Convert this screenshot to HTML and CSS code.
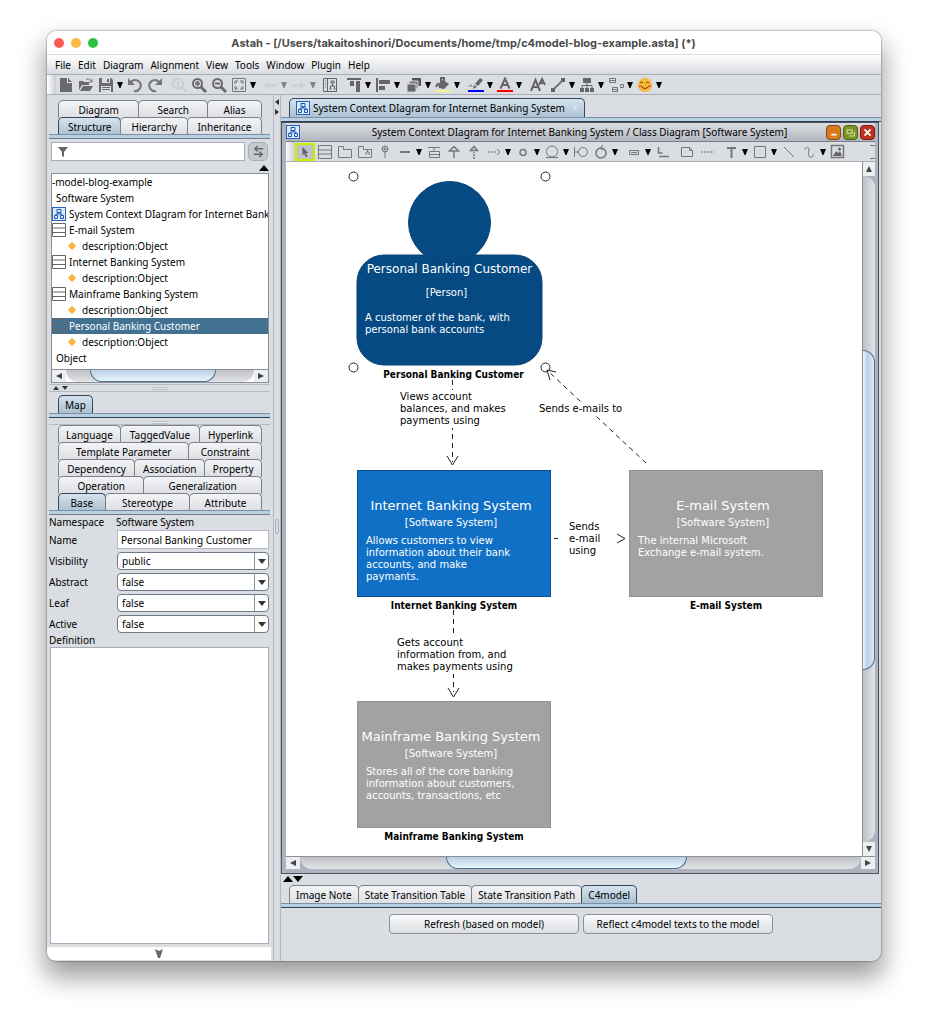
FILE: index.html
```html
<!DOCTYPE html>
<html lang="en">
<head>
<meta charset="utf-8">
<title>Astah - c4model-blog-example.asta</title>
<link rel="stylesheet" href="styles.css">
</head>
<body>
<svg class="defs" aria-hidden="true">
  <symbol id="i-diagram" viewBox="0 0 14 14"><rect x=".5" y=".5" width="13" height="13" fill="#dcebfb" stroke="#2a62b8"/><path d="M5 2.500h4v3H5zM2.500 8.500h3v3h-3zM8.500 8.500h3v3h-3zM7 5.500v1.500M4 8.500V7h6v1.500" fill="none" stroke="#1c56b4"/></symbol>
  <symbol id="i-class" viewBox="0 0 14 14"><path d="M.5.500h13v13H.500zM.500 5h13M.500 9.500h13" fill="none" stroke="#666"/></symbol>
  <symbol id="i-attr" viewBox="0 0 10 10"><path d="M5 1l4 4-4 4-4-4z" fill="#fbb034"/></symbol>
  <symbol id="i-caret" viewBox="0 0 6 6"><path d="M0 0h6L3.500 6h-1z" fill="currentColor"/></symbol>
</svg>
<div class="window">
  <header class="titlebar">
    <span class="light red"></span><span class="light amber"></span><span class="light green"></span>
    <h1>Astah - [/Users/takaitoshinori/Documents/home/tmp/c4model-blog-example.asta] (*)</h1>
  </header>
  <nav class="menubar">
    <button>File</button><button>Edit</button><button>Diagram</button><button>Alignment</button><button>View</button><button>Tools</button><button>Window</button><button>Plugin</button><button>Help</button>
  </nav>
  <div class="toolbar main-tools">
    <button class="tool" aria-label="New"><svg viewBox="0 0 16 16"><path d="M2 1h7v5h5v9H2zM10 1l4 4h-4z" fill="#6b6b6b"/></svg></button>
    <button class="tool" aria-label="Open"><svg viewBox="0 0 16 16"><path d="M1 13V4h4l1 1h5v3H4zM2 14l3-5h10l-3 5z" fill="#6b6b6b"/><path d="M8 3c2-2 4-1 5 1M14 2v3h-3" fill="none" stroke="#6b6b6b"/></svg></button>
    <button class="tool split" aria-label="Save"><svg viewBox="0 0 16 16"><path d="M1 1h12l2 2v12H1z" fill="#6b6b6b"/><path d="M4 1h8v5H4zM3 9h10v6H3z" fill="#dadde2"/><path d="M9 2h2v3H9zM4 10h8v1H4zM4 12h8v1H4z" fill="#6b6b6b"/></svg><svg class="caret"><use href="#i-caret"/></svg></button>
    <button class="tool" aria-label="Undo"><svg viewBox="0 0 16 16"><path d="M4 5a5.500 5.500 0 1 1 3 9" fill="none" stroke="#777" stroke-width="2"/><path d="M1 1v7h7z" fill="#777"/></svg></button>
    <button class="tool" aria-label="Redo"><svg viewBox="0 0 16 16"><path d="M12 5a5.500 5.500 0 1 0-3 9" fill="none" stroke="#777" stroke-width="2"/><path d="M15 1v7H8z" fill="#777"/></svg></button>
    <button class="tool gap4 faded" aria-label="Actual size"><svg viewBox="0 0 16 16"><circle cx="7" cy="6.500" r="5" fill="none" stroke="#777" stroke-width="2"/><path d="M11 10l4 5M7 4v5" stroke="#777" stroke-width="2"/></svg></button>
    <button class="tool" aria-label="Zoom in"><svg viewBox="0 0 16 16"><circle cx="6.500" cy="6.500" r="4.500" fill="none" stroke="#6b6b6b" stroke-width="2"/><path d="M10 10l5 5" stroke="#6b6b6b" stroke-width="3"/><path d="M4 6.500h5M6.500 4v5" stroke="#6b6b6b" stroke-width="2"/></svg></button>
    <button class="tool" aria-label="Zoom out"><svg viewBox="0 0 16 16"><circle cx="6.500" cy="6.500" r="4.500" fill="none" stroke="#6b6b6b" stroke-width="2"/><path d="M10 10l5 5" stroke="#6b6b6b" stroke-width="3"/><path d="M4 6.500h5" stroke="#6b6b6b" stroke-width="2"/></svg></button>
    <button class="tool split" aria-label="Fit"><svg viewBox="0 0 16 16"><path d="M1.500 1.500h13v13h-13z" fill="none" stroke="#777"/><path d="M4 7V4h3M9 4h3v3M12 9v3H9M7 12H4V9M4 4l2 2M12 4l-2 2M12 12l-2-2M4 12l2-2" fill="none" stroke="#777"/></svg><svg class="caret"><use href="#i-caret"/></svg></button>
    <button class="tool split gap2 faded" aria-label="Back"><svg viewBox="0 0 16 16"><path d="M1 8l6-4v3h8v3H7v2z" fill="#999"/></svg><svg class="caret"><use href="#i-caret"/></svg></button>
    <button class="tool split faded" aria-label="Forward"><svg viewBox="0 0 16 16"><path d="M15 8L9 4v3H1v3h8v2z" fill="#999"/></svg><svg class="caret"><use href="#i-caret"/></svg></button>
    <button class="tool gap2" aria-label="Diagram tree"><svg viewBox="0 0 16 16"><path d="M1.500 1.500h13v13h-13zM5.500 2v12M9 4h3v2H9zM10.500 6v3M8.500 12V9h4v3M7.500 12h2M11.500 12h2M3 4h1M3 7h1M3 10h1" fill="none" stroke="#666"/></svg></button>
    <button class="tool split gap4" aria-label="Align top"><svg viewBox="0 0 16 16"><path d="M1 1h14v2H1zM4 4h4v5H4zM10 4h4v11h-4z" fill="#666"/></svg><svg class="caret"><use href="#i-caret"/></svg></button>
    <button class="tool split" aria-label="Align left"><svg viewBox="0 0 16 16"><path d="M1 1h2v14H1zM4 3h11v4H4zM4 9h6v4H4z" fill="#666"/></svg><svg class="caret"><use href="#i-caret"/></svg></button>
    <button class="tool split gap2" aria-label="Depth"><svg viewBox="0 0 16 16"><path d="M6 1h9v8H6z" fill="#555"/><path d="M3 4h9v8H3z" fill="#777" stroke="#dadde2"/><path d="M1 7h9v8H1z" fill="#666" stroke="#dadde2"/></svg><svg class="caret"><use href="#i-caret"/></svg></button>
    <button class="tool split" aria-label="Fill color"><svg viewBox="0 0 16 16"><path d="M3 7l5-4 6 4-5 5-5-1z" fill="#666"/><path d="M6 5V1h3v4M3 6L1 10" fill="none" stroke="#666" stroke-width="2"/><path d="M0 13h16v2H0z" fill="#f8f08c"/></svg><svg class="caret"><use href="#i-caret"/></svg></button>
    <button class="tool split gap4" aria-label="Line color"><svg viewBox="0 0 16 16"><path d="M7 7l5-6 3 2-5 6zM6 8l3 2-4 2z" fill="#666"/><path d="M1 10c1-3 3-2 3 0" fill="none" stroke="#666"/><path d="M0 13h16v2H0z" fill="#00f"/></svg><svg class="caret"><use href="#i-caret"/></svg></button>
    <button class="tool split" aria-label="Font color"><svg viewBox="0 0 16 16"><path d="M3.500 11.500L8 1.500l4.500 10M5 8h6" fill="none" stroke="#666" stroke-width="2"/><path d="M0 13h16v2H0z" fill="#f00"/></svg><svg class="caret"><use href="#i-caret"/></svg></button>
    <button class="tool gap4" aria-label="Font"><svg viewBox="0 0 16 16"><path d="M1 14L5.500 3 10 14M3 10h5" fill="none" stroke="#666" stroke-width="2"/><path d="M9 8l3-6 3 6M10 6h4" fill="none" stroke="#666" stroke-width="2"/></svg></button>
    <button class="tool split" aria-label="Line style"><svg viewBox="0 0 16 16"><path d="M3 13L13 3" stroke="#777" stroke-width="2"/><path d="M1 11h4v4H1zM11 1h4v4h-4z" fill="#666"/></svg><svg class="caret"><use href="#i-caret"/></svg></button>
    <button class="tool split" aria-label="Tree layout"><svg viewBox="0 0 16 16"><path d="M4 1h8v5H4zM1 11h4v4H1zM6 11h4v4H6zM11 11h4v4h-4z" fill="#666"/><path d="M8 6v5M3 11V8.500h10V11" fill="none" stroke="#666"/></svg><svg class="caret"><use href="#i-caret"/></svg></button>
    <button class="tool split" aria-label="Auto layout"><svg viewBox="0 0 16 16"><path d="M1.500 1.500h6v4h-6zM1.500 3.500h6M4.500 10.500h5v4h-5zM4.500 12.500h5M12.500 7.500h3v3h-3z" fill="none" stroke="#777"/></svg><svg class="caret"><use href="#i-caret"/></svg></button>
    <button class="tool split" aria-label="Emoji"><svg viewBox="0 0 16 16"><circle cx="8" cy="8" r="7" fill="#f8b836"/><circle cx="3" cy="9" r="1.500" fill="#f07f32"/><circle cx="13" cy="9" r="1.500" fill="#f07f32"/><path d="M3 6q2-2 3 0M9 6q2-2 3 0M4 9q4 5 8 0" fill="none" stroke="#6b3f14"/></svg><svg class="caret"><use href="#i-caret"/></svg></button>
  </div>
  <div class="workspace">
    <aside class="side">
      <div class="tabs stack">
        <div class="tabrow"><button class="tab w81">Diagram</button><button class="tab w69">Search</button><button class="tab w54">Alias</button></div>
        <div class="tabrow"><button class="tab on w63">Structure</button><button class="tab w67">Hierarchy</button><button class="tab w75">Inheritance</button></div>
      </div>
      <div class="searchrow">
        <label class="search"><svg viewBox="0 0 12 12"><path d="M1 1h10L7 6v5L5 10V6z" fill="#666"/></svg><input type="text" aria-label="Filter"></label>
        <button class="swap" aria-label="Sync"><svg viewBox="0 0 14 14"><path d="M12 4H3M6 1L3 4l3 3M2 10h9M8 7l3 3-3 3" fill="none" stroke="#666" stroke-width="1.500"/></svg></button>
      </div>
      <div class="collapse"><svg viewBox="0 0 10 6"><path d="M0 6l5-6 5 6z"/></svg></div>
      <div class="treebox">
        <ul class="tree">
          <li>-model-blog-example</li>
          <li class="in1">Software System</li>
          <li><svg class="ic"><use href="#i-diagram"/></svg>System Context DIagram for Internet Banking System</li>
          <li><svg class="ic"><use href="#i-class"/></svg>E-mail System</li>
          <li class="in2"><svg class="dot"><use href="#i-attr"/></svg>description:Object</li>
          <li><svg class="ic"><use href="#i-class"/></svg>Internet Banking System</li>
          <li class="in2"><svg class="dot"><use href="#i-attr"/></svg>description:Object</li>
          <li><svg class="ic"><use href="#i-class"/></svg>Mainframe Banking System</li>
          <li class="in2"><svg class="dot"><use href="#i-attr"/></svg>description:Object</li>
          <li class="sel"><svg class="ic"><use href="#i-class"/></svg>Personal Banking Customer</li>
          <li class="in2"><svg class="dot"><use href="#i-attr"/></svg>description:Object</li>
          <li class="in1">Object</li>
        </ul>
        <div class="hscroll side-scroll"><i class="btn left"></i><span class="track"><b></b></span><i class="btn right"></i></div>
      </div>
      <div class="splitter"><svg viewBox="0 0 16 4"><path d="M0 4l3-4 3 4zM9 0h6l-3 4z" fill="#333"/></svg><span class="grip"></span></div>
      <div class="tabs single"><div class="tabrow"><button class="tab on">Map</button></div></div>
      <div class="splitter thin"><span class="grip"></span></div>
      <div class="tabs stack props">
        <div class="tabrow"><button class="tab w63">Language</button><button class="tab w81">TaggedValue</button><button class="tab w63">Hyperlink</button></div>
        <div class="tabrow"><button class="tab w132">Template Parameter</button><button class="tab w73">Constraint</button></div>
        <div class="tabrow"><button class="tab w77">Dependency</button><button class="tab w71">Association</button><button class="tab w57">Property</button></div>
        <div class="tabrow"><button class="tab w86">Operation</button><button class="tab w119">Generalization</button></div>
        <div class="tabrow"><button class="tab on w47">Base</button><button class="tab w86">Stereotype</button><button class="tab w73">Attribute</button></div>
      </div>
      <form class="form">
        <div class="field ns"><span>Namespace</span><span>Software System</span></div>
        <div class="field"><label for="nm">Name</label><input id="nm" type="text" value="Personal Banking Customer"></div>
        <div class="field"><label for="vis">Visibility</label><span class="combo"><select id="vis"><option>public</option></select></span></div>
        <div class="field"><label for="abs">Abstract</label><span class="combo"><select id="abs"><option>false</option></select></span></div>
        <div class="field"><label for="leaf">Leaf</label><span class="combo"><select id="leaf"><option>false</option></select></span></div>
        <div class="field"><label for="act">Active</label><span class="combo"><select id="act"><option>false</option></select></span></div>
        <label class="deflabel" for="def">Definition</label>
        <textarea id="def"></textarea>
      </form>
      <div class="more"><svg viewBox="0 0 8 9"><path d="M0 0l4 2 4-2-3 9H3z" fill="#666"/></svg></div>
    </aside>
    <div class="divider"><svg viewBox="0 0 4 16"><path d="M4 0v6L0 3zM0 10v6l4-3z" fill="#333"/></svg><span></span></div>
    <main class="editor">
      <div class="tabs doc"><div class="tabrow"><button class="tab on"><svg class="ic"><use href="#i-diagram"/></svg>System Context DIagram for Internet Banking System<span class="x">×</span></button></div></div>
      <section class="frame">
        <div class="frametitle">
          <svg class="ic"><use href="#i-diagram"/></svg>
          <h2>System Context DIagram for Internet Banking System / Class Diagram [Software System]</h2>
          <button class="wb min" aria-label="Minimize"><svg viewBox="0 0 15 15"><path d="M5 10h6" stroke="#fff" stroke-width="2"/></svg></button>
          <button class="wb max" aria-label="Restore"><svg viewBox="0 0 15 15"><path d="M3.500 4.500h6v4h-6zM6 11.500h6v-5" fill="none" stroke="#e6eecb"/></svg></button>
          <button class="wb close" aria-label="Close"><svg viewBox="0 0 15 15"><path d="M4 4l7 7M11 4l-7 7" stroke="#fff" stroke-width="2"/></svg></button>
        </div>
        <div class="toolbar draw-tools">
          <button class="tool active" aria-label="Select"><svg viewBox="0 0 16 16"><path d="M5 2l7 7H9l2 4-2 1-2-4-2 2z" fill="#666"/></svg></button>
          <button class="tool" aria-label="Class"><svg viewBox="0 0 16 16"><path d="M1.500 1.500h13v13h-13zM1.500 6h13M1.500 10h13" fill="none" stroke="#777"/></svg></button>
          <button class="tool" aria-label="Package"><svg viewBox="0 0 16 16"><path d="M1.500 13.500v-11h5v3h8v8z" fill="none" stroke="#777"/></svg></button>
          <button class="tool" aria-label="Subsystem"><svg viewBox="0 0 16 16"><path d="M1.500 13.500v-11h5v3h8v8zM9 11V8h3v3M10.500 8V6" fill="none" stroke="#777"/></svg></button>
          <button class="tool" aria-label="Containment"><svg viewBox="0 0 16 16"><circle cx="8" cy="5" r="3" fill="none" stroke="#777"/><path d="M8 2v12M5 5h6" stroke="#777"/></svg></button>
          <button class="tool split" aria-label="Association"><svg viewBox="0 0 16 16"><path d="M3 8h10" stroke="#777" stroke-width="2"/></svg><svg class="caret"><use href="#i-caret"/></svg></button>
          <button class="tool" aria-label="Association class"><svg viewBox="0 0 16 16"><path d="M2 3.500h12M8 3v4M3.500 7.500h10v6h-10zM3.500 10.500h10" fill="none" stroke="#777"/></svg></button>
          <button class="tool" aria-label="Generalization"><svg viewBox="0 0 16 16"><path d="M8 7v7M3.500 7L8 2.500 12.500 7z" fill="none" stroke="#777" stroke-width="1.500"/></svg></button>
          <button class="tool" aria-label="Realization"><svg viewBox="0 0 16 16"><path d="M8 8v1M8 10v2M8 13v2M4.500 6.500L8 2.500l3.500 4z" fill="none" stroke="#777" stroke-width="1.500"/></svg></button>
          <button class="tool split" aria-label="Dependency"><svg viewBox="0 0 16 16"><path d="M2 8h9" stroke="#777" stroke-dasharray="2 1"/><path d="M11 5l3 3-3 3" fill="none" stroke="#777"/></svg><svg class="caret"><use href="#i-caret"/></svg></button>
          <button class="tool split" aria-label="Interface"><svg viewBox="0 0 16 16"><circle cx="8" cy="8.500" r="3" fill="none" stroke="#777" stroke-width="1.500"/></svg><svg class="caret"><use href="#i-caret"/></svg></button>
          <button class="tool split" aria-label="Entity"><svg viewBox="0 0 16 16"><circle cx="8" cy="7.500" r="5.500" fill="none" stroke="#777"/><path d="M2 13.500h12" stroke="#777"/></svg><svg class="caret"><use href="#i-caret"/></svg></button>
          <button class="tool" aria-label="Boundary"><svg viewBox="0 0 16 16"><circle cx="10" cy="8" r="4.500" fill="none" stroke="#777"/><path d="M1.500 3v10M2 8h4" stroke="#777"/></svg></button>
          <button class="tool split" aria-label="Control"><svg viewBox="0 0 16 16"><circle cx="8" cy="9" r="5" fill="none" stroke="#777" stroke-width="1.500"/><path d="M10 1L7 4l3 2" fill="none" stroke="#777"/></svg><svg class="caret"><use href="#i-caret"/></svg></button>
          <button class="tool split gap4" aria-label="Instance"><svg viewBox="0 0 16 16"><path d="M3.500 6.500h9v4h-9zM5 8.500h6" fill="none" stroke="#777"/></svg><svg class="caret"><use href="#i-caret"/></svg></button>
          <button class="tool" aria-label="Link"><svg viewBox="0 0 16 16"><path d="M3.500 3v6h4M4 12.500h10" fill="none" stroke="#777" stroke-width="1.500"/></svg></button>
          <button class="tool gap4" aria-label="Note"><svg viewBox="0 0 16 16"><path d="M2.500 3.500h8l3 3v6h-11zM10.500 3.500v3h3" fill="none" stroke="#777"/></svg></button>
          <button class="tool" aria-label="Note anchor"><svg viewBox="0 0 16 16"><path d="M2 8h13" stroke="#777" stroke-dasharray="2 1"/></svg></button>
          <button class="tool split gap4" aria-label="Text"><svg viewBox="0 0 16 16"><path d="M4 4h9M8.500 4v10" stroke="#777" stroke-width="2"/></svg><svg class="caret"><use href="#i-caret"/></svg></button>
          <button class="tool split" aria-label="Rectangle"><svg viewBox="0 0 16 16"><path d="M2.500 2.500h11v11h-11z" fill="none" stroke="#777"/></svg><svg class="caret"><use href="#i-caret"/></svg></button>
          <button class="tool" aria-label="Line"><svg viewBox="0 0 16 16"><path d="M3 3l10 10" stroke="#777"/></svg></button>
          <button class="tool split" aria-label="Freehand"><svg viewBox="0 0 16 16"><path d="M4 6c0-4 5-3 4 0s-1 6 1 7 4-1 3-3" fill="none" stroke="#777"/></svg><svg class="caret"><use href="#i-caret"/></svg></button>
          <button class="tool" aria-label="Image"><svg viewBox="0 0 16 16"><path d="M1.500 1.500h12v12h-12z" fill="none" stroke="#777" stroke-width="1.500"/><path d="M3 12l3-5 2 2 2-2 2 5z" fill="#666"/><circle cx="9.500" cy="5" r="1.500" fill="#666"/></svg></button>
          <span class="overflow"></span>
        </div>
        <div class="viewport">
          <div class="canvas">
            <svg class="edges" width="576" height="695" viewBox="0 0 576 695">
              <g fill="none" stroke="#222">
                <path d="M166.500 218V300" stroke-dasharray="5 4"/>
                <path d="M161 294l5.500 9 5.500-9"/>
                <path d="M360 301L262 209" stroke-dasharray="5 4"/>
                <path d="M270 210l-9-2 3 10"/>
                <path d="M268 376.500h4M331 372l8 4.500-8 4.500"/>
                <path d="M167.500 448v82" stroke-dasharray="5 4"/>
                <path d="M162 526l5.500 9 5.500-9"/>
              </g>
              <g fill="#054a82" stroke="#0a4274">
                <rect x="71" y="93" width="185" height="110" rx="27"/>
                <circle cx="163.500" cy="60.500" r="41"/>
                <path d="M108.500 142v60M219.500 142v60" opacity=".5"/>
              </g>
              <g fill="#fff" stroke="#222"><circle cx="67.500" cy="14.500" r="4.500"/><circle cx="259.500" cy="14.500" r="4.500"/><circle cx="67.500" cy="205.500" r="4.500"/><circle cx="259.500" cy="205.500" r="4.500" fill="none"/></g>
            </svg>
            <article class="node person"><h3>Personal Banking Customer</h3><p class="kind">[Person]</p><p class="desc">A customer of the bank, with<br>personal bank accounts</p><footer>Personal Banking Customer</footer></article>
            <article class="node ibs"><div class="card"><h3>Internet Banking System</h3><p class="kind">[Software System]</p><p class="desc">Allows customers to view<br>information about their bank<br>accounts, and make<br>paymants.</p></div><footer>Internet Banking System</footer></article>
            <article class="node email"><div class="card"><h3>E-mail System</h3><p class="kind">[Software System]</p><p class="desc">The internal Microsoft<br>Exchange e-mail system.</p></div><footer>E-mail System</footer></article>
            <article class="node mainframe"><div class="card"><h3>Mainframe Banking System</h3><p class="kind">[Software System]</p><p class="desc">Stores all of the core banking<br>information about customers,<br>accounts, transactions, etc</p></div><footer>Mainframe Banking System</footer></article>
            <p class="edge e1">Views account<br>balances, and makes<br>payments using</p>
            <p class="edge e2">Sends e-mails to</p>
            <p class="edge e3">Sends<br>e-mail<br>using</p>
            <p class="edge e4">Gets account<br>information from, and<br>makes payments using</p>
          </div>
          <div class="vscroll"><i class="btn up"></i><span class="track"><b></b></span><i class="btn down"></i></div>
          <div class="hscroll main-scroll"><i class="btn left"></i><span class="track"><b></b></span><i class="btn right"></i></div>
        </div>
      </section>
      <div class="updown"><svg viewBox="0 0 20 6"><path d="M0 6l5-6 5 6zM10 0h10l-5 6z"/></svg></div>
      <div class="tabs extra"><div class="tabrow"><button class="tab">Image Note</button><button class="tab">State Transition Table</button><button class="tab">State Transition Path</button><button class="tab on">C4model</button></div></div>
      <div class="actions"><button>Refresh (based on model)</button><button>Reflect c4model texts to the model</button></div>
    </main>
  </div>
</div>
</body>
</html>
```
FILE: styles.css
```css
* { box-sizing: border-box; }
body {
  margin: 0; min-height: 100vh; padding: 31px 47px 62px 47px;
  display: flex; background: #fff; color: #000;
  font: 10px/14px "Noto Sans", "Open Sans", sans-serif;
}
button, input, select, textarea { font: inherit; color: inherit; margin: 0; }
button { border: 0; background: none; padding: 0; }
h1, h2, h3, p, ul { margin: 0; padding: 0; font-size: inherit; font-weight: inherit; }
svg { display: block; }
.defs { position: absolute; width: 0; height: 0; }
.window {
  flex: 1; min-width: 0; display: flex; flex-direction: column; overflow: hidden;
  background: #dadde2; border-radius: 9px;
  box-shadow: 0 0 1px 1px rgba(0,0,0,.2), 0 14px 26px 2px rgba(0,0,0,.4);
}
.titlebar { height: 24px; display: flex; align-items: center; gap: 7px; padding: 0 7px; background: #fff; border-bottom: 1px solid #ddd; }
.light { width: 10px; height: 10px; border-radius: 50%; }
.red { background: #fc5b57; } .amber { background: #fdb93f; } .green { background: #29c340; }
.titlebar h1 { flex: 1; padding-right: 52px; text-align: center; font: bold 11px/14px Inter, sans-serif; color: #4a4a4a; }
.menubar { height: 20px; display: flex; align-items: center; gap: 7px; padding: 0 8px; background: linear-gradient(#fff, #d8dbe0); border-bottom: 1px solid #a9adb5; }
.toolbar { display: flex; align-items: center; height: 20px; border-bottom: 1px solid #a9adb5; background: #dadde2; }
.toolbar::before { content: ""; width: 9px; align-self: stretch; background: linear-gradient(90deg, #fff, #c9ccd2); }
.tool { display: flex; align-items: center; width: 20px; height: 18px; padding: 0 2px; }
.tool svg { width: 16px; height: 16px; flex: none; }
.split { width: 29px; }
.tool .caret { width: 6px; height: 6px; margin-left: 3px; color: #000; }
.gap2 { margin-left: 2px; }
.gap4 { margin-left: 4px; }
.faded { opacity: .4; }
.faded svg:first-child { opacity: .4; }
.workspace { flex: 1; min-height: 0; display: flex; }

.side { width: 226px; display: flex; flex-direction: column; padding: 5px 1px 1px 0; }
.tabrow { display: flex; }
.tab {
  height: 18px; margin-bottom: -1px; padding: 0 6px; border: 1px solid #7d8087; border-radius: 5px 5px 0 0; border-bottom: 0;
  background: linear-gradient(#f3f4f6, #dcdee3); white-space: nowrap;
}
.tab + .tab { margin-left: -1px; }
.tab.on { background: linear-gradient(#d6e3ee, #a9bfd0); border-color: #33475e; }
.tabs { border-bottom: 1px solid #2c3d55; }
.tabs::after { content: ""; display: block; height: 3px; border-top: 1px solid #7d8fa3; background: #b9d0e2; position: relative; }
.stack { margin: 0 2px; border-color: #717c8c; }
.stack .tabrow { padding: 0 8px 0 9px; }
.stack .tab { flex: 1 1 0; min-width: 0; padding: 0; }
.stack .w47 { flex-grow: 47; } .stack .w54 { flex-grow: 54; } .stack .w57 { flex-grow: 57; } .stack .w63 { flex-grow: 63; }
.stack .w67 { flex-grow: 67; } .stack .w69 { flex-grow: 69; } .stack .w71 { flex-grow: 71; } .stack .w73 { flex-grow: 73; }
.stack .w75 { flex-grow: 75; } .stack .w77 { flex-grow: 77; } .stack .w81 { flex-grow: 81; } .stack .w86 { flex-grow: 86; }
.stack .w119 { flex-grow: 119; } .stack .w132 { flex-grow: 132; }
.searchrow { display: flex; gap: 3px; padding: 3px 4px 0; height: 22px; }
.search { flex: 1; display: flex; align-items: center; padding-left: 5px; background: #fff; border: 1px solid #aab; }
.search svg { width: 12px; height: 12px; }
.search input { flex: 1; min-width: 0; border: 0; outline: 0; background: none; }
.swap { width: 20px; display: grid; place-items: center; background: #c5c8ce; border: 1px solid #a9acb3; border-radius: 5px; }
.swap svg { width: 13px; height: 13px; }
.collapse { height: 12px; padding: 4px 3px 0; display: flex; justify-content: flex-end; }
.collapse svg { width: 10px; height: 6px; }
.treebox { margin: 0 3px 0 4px; border: 1px solid #8c9099; background: #fff; overflow: hidden; }
.tree { list-style: none; padding: 0 0 3px; }
.tree li { height: 16px; display: flex; align-items: center; white-space: nowrap; overflow: hidden; }
.tree .ic { margin-right: 3px; }
.ic { width: 14px; height: 14px; flex: none; }
.tree .in1 { padding-left: 4px; }
.tree .in2 { padding-left: 15px; }
.dot { width: 10px; height: 10px; margin-right: 5px; }
.tree .sel { background: #427192; color: #fff; }

.hscroll { display: flex; height: 13px; border-top: 1px solid #8c9099; }
.hscroll .btn { width: 14px; }
.btn { display: grid; place-items: center; background: #eceef1; }
.btn::after { content: ""; border: 3px solid transparent; }
.left::after { border-right: 6px solid #444; border-left: 0; }
.right::after { border-left: 6px solid #444; border-right: 0; }
.up::after { border-bottom: 6px solid #444; border-top: 0; }
.down::after { border-top: 6px solid #444; border-bottom: 0; }
.track { flex: 1; display: flex; background: linear-gradient(#bfc1c6, #e2e4e8); }
.hscroll .track { border-radius: 0 0 12px 12px; }
.hscroll b { border: 1px solid #4f6f8f; border-top: 0; border-radius: 0 0 12px 12px; background: linear-gradient(#b9cfe3, #e8f6ff); }
.side-scroll b { width: 67%; margin-left: 13%; }
.main-scroll b { width: 43%; margin-left: 26%; }
.splitter { height: 8px; display: grid; grid-template-columns: 1fr 16px 1fr; align-items: center; margin: 1px 2px 0; border-top: 1px solid #b5b9c1; border-bottom: 1px solid #b5b9c1; }
.splitter svg { width: 16px; height: 4px; margin-left: 4px; }
.grip { grid-column: 2; height: 3px; border: 1px solid #b5b9c1; border-radius: 2px; background: #eee; }
.thin { height: 5px; margin-top: 2px; border-top: 0; }
.single { margin: 3px 2px 0; }
.single .tabrow { padding-left: 9px; }
.single .tab { height: 19px; }
.form { flex: 1; display: flex; flex-direction: column; padding: 0 3px 0 2px; }
.field { display: grid; grid-template-columns: 68px 1fr; align-items: center; height: 21px; }
.ns { height: 14px; grid-template-columns: 67px 1fr; }
.field input { height: 19px; width: 100%; padding: 0 3px; border: 1px solid #b5b9c1; background: #fff; }
.combo { display: flex; position: relative; height: 18px; }
.combo select { flex: 1; appearance: none; border: 1px solid #6f7a8a; border-radius: 4px; background: #fff; padding: 0 4px; line-height: 14px; }
.combo::after { content: ""; position: absolute; right: 3px; top: 7px; border: 4px solid transparent; border-top: 5px solid #333; border-bottom: 0; pointer-events: none; }
.combo::before { content: ""; position: absolute; right: 14px; top: 1px; bottom: 1px; border-left: 1px solid #8795a8; }
.deflabel { height: 13px; line-height: 13px; }
.form textarea { flex: 1; resize: none; margin: 0 0 3px 1px; border: 1px solid #a9acb8; background: #fff; padding: 2px; }
.more { height: 13px; margin-right: 1px; background: #fff; display: grid; place-items: center; }
.more svg { width: 8px; height: 9px; }
.divider { width: 8px; border-left: 1px solid #b5b9c1; border-right: 1px solid #b5b9c1; display: flex; flex-direction: column; align-items: center; padding-top: 4px; }
.divider svg { width: 4px; height: 16px; }
.divider span { width: 4px; height: 15px; margin-top: 404px; border: 1px solid #a9adb5; border-radius: 2px; }

.editor { flex: 1; min-width: 0; display: flex; flex-direction: column; }
.doc { padding-top: 3px; }
.doc .tabrow, .extra .tabrow { padding-left: 8px; }
.doc .tab { display: flex; align-items: center; gap: 3px; height: 20px; padding: 0 6px 1px; }
.x { margin-left: 4px; color: #dfe6ec; font-weight: bold; }
.frame { flex: 1; min-height: 0; display: flex; flex-direction: column; margin-right: 2px; padding: 0 3px 4px 4px; border: 1px solid #4a5260; background: #aeb3bd; }
.frametitle { display: flex; align-items: center; gap: 2px; height: 19px; background: linear-gradient(#dcdee2, #b3b6bf); border-bottom: 1px solid #777e8a; }
.frametitle h2 { flex: 1; padding-left: 33px; text-align: center; white-space: nowrap; overflow: hidden; }
.wb { width: 15px; height: 15px; border-radius: 4px; border: 1px solid #7a4a1a; }
.wb svg { width: 13px; height: 13px; }
.min { background: #d97a1c; } .max { background: #7d9420; border-color: #4c5e12; } .close { background: #c0301f; border-color: #7a1a10; }
.active { background: #c0c3c9; border: 2px solid #c8f000; padding: 0; }
.active svg { width: 16px; height: 14px; }
.overflow { width: 5px; height: 14px; margin-left: auto; border: solid #777; border-width: 1px 0; }
.viewport { flex: 1; min-height: 0; display: grid; grid-template: 1fr 13px / 1fr 13px; }
.canvas { position: relative; overflow: hidden; background: #fff; font-family: "DejaVu Sans", sans-serif; }
.main-scroll { grid-column: 1 / -1; }
.vscroll { display: flex; flex-direction: column; border-left: 1px solid #8c9099; }
.vscroll .btn { height: 14px; }
.vscroll .track { flex-direction: column; border-radius: 0 12px 12px 0; background: linear-gradient(90deg, #bfc1c6, #e2e4e8); }
.vscroll b { height: 48%; margin-top: 174px; border: 1px solid #4f6f8f; border-left: 0; border-radius: 0 12px 12px 0; background: linear-gradient(90deg, #e8f6ff, #b9cfe3 40%, #dcecf8); }

.edges { position: absolute; left: 0; top: 0; }
.node { position: absolute; width: 194px; line-height: 12px; color: #fff; }
.node h3 { font-size: 13px; line-height: 18px; text-align: center; white-space: nowrap; }
.kind { line-height: 15px; text-align: center; }
.desc { padding-left: 8px; margin-top: 5px; white-space: nowrap; }
.node footer { margin-top: 3px; text-align: center; font-family: "DejaVu Sans Condensed", sans-serif; font-weight: bold; color: #000; }
.card { height: 127px; padding: 26px 6px 0 0; border: 1px solid #0b4f92; background: #1070c5; }
.email .card, .mainframe .card { background: #a2a2a2; border-color: #929292; }
.person { left: 71px; top: 98px; width: 185px; }
.person h3 { font-size: 12px; }
.person .kind { margin-top: 7px; padding-right: 6px; }
.person .desc { margin-top: 12px; height: 54px; }
.person footer { padding-left: 8px; }
.ibs { left: 71px; top: 308px; }
.email { left: 343px; top: 308px; }
.mainframe { left: 71px; top: 539px; }
.edge { position: absolute; line-height: 12px; background: #fff; white-space: nowrap; padding: 1px 0; }
.e1 { left: 114px; top: 228px; } .e2 { left: 253px; top: 240px; } .e3 { left: 283px; top: 358px; } .e4 { left: 111px; top: 474px; }

.updown { height: 11px; padding: 2px 2px 0; }
.updown svg { width: 20px; height: 6px; }
.extra .tab { height: 19px; }
.actions { display: flex; justify-content: center; gap: 4px; padding-top: 6px; height: 53px; }
.actions button { width: 190px; height: 20px; border: 1px solid #8c9099; border-radius: 4px; background: linear-gradient(#fafafb, #dcdee2); }
```
